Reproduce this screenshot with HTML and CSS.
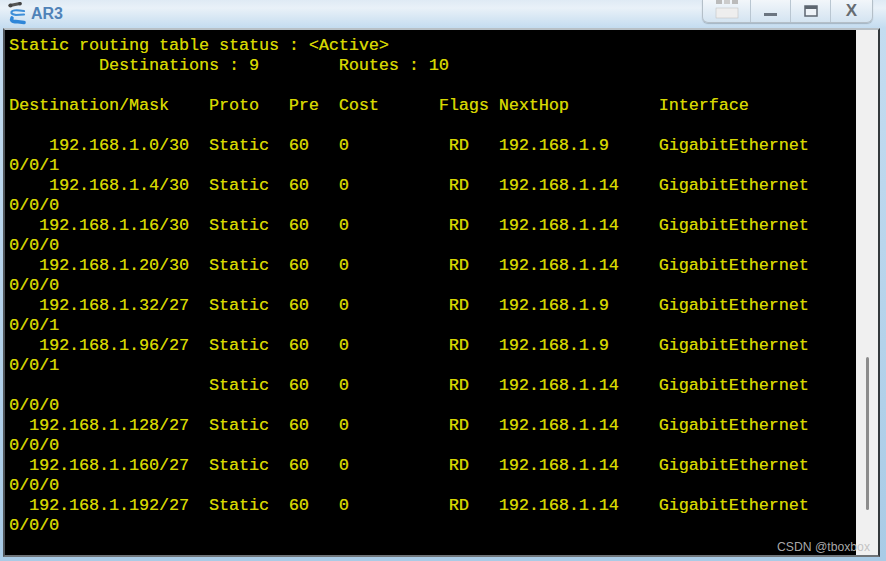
FILE: index.html
```html
<!DOCTYPE html>
<html lang="en">
<head>
<meta charset="utf-8">
<title>AR3</title>
<link rel="stylesheet" href="styles.css">
</head>
<body>
<div class="window">
  <header class="titlebar">
    <div class="title">
      <svg class="logo" width="20" height="24" viewBox="0 0 20 24" aria-hidden="true">
        <path d="M2 3.5 L12 1.5" stroke="#555" stroke-width="3" stroke-linecap="round" fill="none"/>
        <circle cx="2.5" cy="3.5" r="2" fill="#444"/>
        <circle cx="12" cy="1.8" r="1.8" fill="#444"/>
        <path d="M16 9 C10 8 4 8 3.5 10 C3 12 5 12.5 8 13 L16 12.5" stroke="#3f8fd8" stroke-width="2.2" stroke-linecap="round" fill="none"/>
        <path d="M4 16 C3 18 4 20 8 19.5 L16 20.5" stroke="#2f86d8" stroke-width="3.6" stroke-linecap="round" fill="none"/>
      </svg>
      <span class="title-text">AR3</span>
    </div>
    <div class="controls">
      <div class="control control-wide">
        <svg width="24" height="20" viewBox="0 0 24 20" aria-hidden="true">
          <rect x="1" y="0" width="6" height="4" fill="#bbb"/>
          <rect x="9" y="0" width="6" height="4" fill="#ccc"/>
          <rect x="17" y="0" width="6" height="4" fill="#bbb"/>
          <rect x="1" y="8" width="22" height="10" fill="#eee" stroke="#bbb" stroke-width="0.5"/>
        </svg>
      </div>
      <div class="control">
        <svg width="14" height="4" viewBox="0 0 14 4" class="icon-min" aria-hidden="true"><rect width="13" height="3" fill="#6b7580"/></svg>
      </div>
      <div class="control">
        <svg width="14" height="12" viewBox="0 0 14 12" aria-hidden="true"><rect x="1" y="1" width="12" height="10" fill="#eef3f8" stroke="#5d6670" stroke-width="1.5"/><rect x="1" y="1" width="12" height="3" fill="#5d6670"/></svg>
      </div>
      <div class="control control-close">X</div>
    </div>
  </header>
  <main class="frame">
<pre class="terminal">Static routing table status : &lt;Active&gt;
         Destinations : 9        Routes : 10

Destination/Mask    Proto   Pre  Cost      Flags NextHop         Interface

    192.168.1.0/30  Static  60   0          RD   192.168.1.9     GigabitEthernet
0/0/1
    192.168.1.4/30  Static  60   0          RD   192.168.1.14    GigabitEthernet
0/0/0
   192.168.1.16/30  Static  60   0          RD   192.168.1.14    GigabitEthernet
0/0/0
   192.168.1.20/30  Static  60   0          RD   192.168.1.14    GigabitEthernet
0/0/0
   192.168.1.32/27  Static  60   0          RD   192.168.1.9     GigabitEthernet
0/0/1
   192.168.1.96/27  Static  60   0          RD   192.168.1.9     GigabitEthernet
0/0/1
                    Static  60   0          RD   192.168.1.14    GigabitEthernet
0/0/0
  192.168.1.128/27  Static  60   0          RD   192.168.1.14    GigabitEthernet
0/0/0
  192.168.1.160/27  Static  60   0          RD   192.168.1.14    GigabitEthernet
0/0/0
  192.168.1.192/27  Static  60   0          RD   192.168.1.14    GigabitEthernet
0/0/0</pre>
    <aside class="scrollbar"><div class="thumb"></div></aside>
  </main>
  <div class="watermark">CSDN @tboxbox</div>
</div>
</body>
</html>
```
FILE: styles.css
```css
html, body {
  margin: 0;
  padding: 0;
}
body {
  width: 886px;
  height: 561px;
  overflow: hidden;
  background: #a9cbe6;
}
.window {
  position: relative;
  width: 886px;
  height: 561px;
  box-sizing: border-box;
  padding: 0 6px 4px 3px;
  display: flex;
  flex-direction: column;
  background: linear-gradient(to bottom, #dfeaf4 0, #e9f1f8 8px, #c4dcf0 28px, #a9cbe6 100%);
}
.titlebar {
  height: 28px;
  flex: none;
  display: flex;
  justify-content: space-between;
  align-items: flex-start;
}
.title {
  display: flex;
  align-items: center;
  gap: 3px;
  height: 28px;
  padding-left: 5px;
}
.logo {
  flex: none;
}
.title-text {
  font: bold 16px "Liberation Sans", sans-serif;
  color: #4f82b8;
}
.controls {
  display: flex;
  height: 22px;
  margin-right: 7px;
  border: 1px solid #b4bfc8;
  border-top: 0;
  border-radius: 0 0 6px 6px;
  background: linear-gradient(to bottom, #f2f6fa, #d4e4f1);
  box-shadow: 0 1px 1px rgba(90, 100, 110, .35);
}
.control {
  width: 40px;
  display: flex;
  align-items: center;
  justify-content: center;
  border-left: 1px solid #b9c6d1;
  box-sizing: border-box;
}
.control:first-child {
  border-left: 0;
}
.control-wide {
  width: 47px;
  align-items: flex-start;
}
.icon-min {
  margin-top: 8px;
}
.control-close {
  width: 42px;
  font: bold 17px "Liberation Sans", sans-serif;
  color: #666c72;
}
.frame {
  flex: 1;
  min-height: 0;
  display: flex;
  border-top: 2px solid #b8c0c6;
  border-left: 2px solid #50565b;
  border-bottom: 2px solid #6f7478;
  border-right: 2px solid #33383c;
}
.terminal {
  flex: 1;
  margin: 0;
  padding: 6px 0 0 4px;
  background: #000;
  color: #d8d800;
  font-family: "Liberation Mono", "Courier New", monospace;
  font-size: 16.67px;
  line-height: 20px;
  text-shadow: 0.4px 0 0 #8f8f00;
  overflow: hidden;
}
.scrollbar {
  width: 22px;
  flex: none;
  background: #f0f0f0;
  position: relative;
}
.thumb {
  position: absolute;
  left: 10px;
  top: 327px;
  width: 3px;
  height: 153px;
  background: #8c8c8c;
  border-radius: 2px;
}
.watermark {
  position: absolute;
  right: 16px;
  bottom: 7px;
  font: 12.2px "Liberation Sans", sans-serif;
  color: rgba(190, 190, 190, .9);
}
```
